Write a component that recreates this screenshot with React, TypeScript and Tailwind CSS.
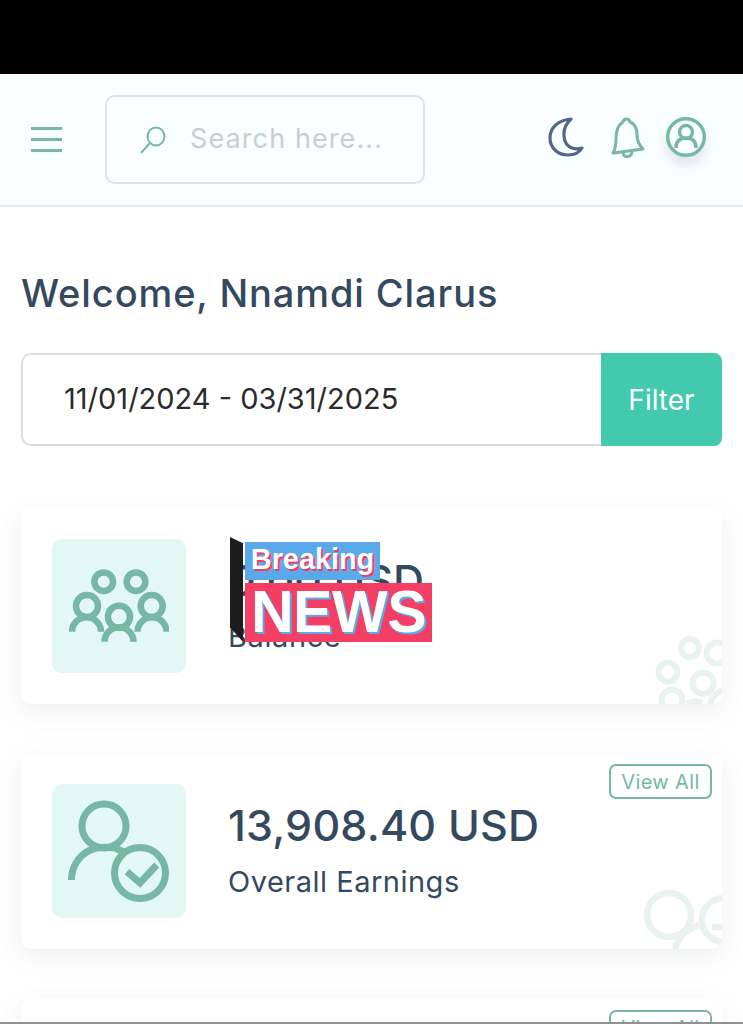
import React from "react";

const G = "#76b8a2";
const FAINT = "#e8f3f0";

function Group({ className }: { className?: string }) {
  return (
    <svg viewBox="0 0 100 74" className={className} fill="none" stroke={G} strokeWidth="6.5">
      <circle cx="34.7" cy="12.7" r="9.3" />
      <circle cx="67" cy="12.7" r="9.3" />
      <circle cx="18" cy="37" r="11" />
      <circle cx="82.7" cy="37" r="11" />
      <circle cx="50" cy="47.7" r="11" />
      <path d="M3 62.7a14.5 14.5 0 0 1 29 0M68.5 62.7a14.5 14.5 0 0 1 29 0M35.5 72.7a14.5 14.5 0 0 1 29 0" />
    </svg>
  );
}

function UserCheck({ className }: { className?: string }) {
  return (
    <svg viewBox="0 0 102 102" className={className} fill="none" stroke={G} strokeWidth="7">
      <circle cx="36" cy="26" r="22" />
      <path d="M3.5 80C3.5 64 14 51 29 48c6-1 13-1 18 0l9 4" />
      <circle cx="72" cy="73" r="25.5" />
      <path d="M59 71.7L72 83l16.7-18" />
    </svg>
  );
}

function GroupDeco() {
  return (
    <svg viewBox="0 0 93 74" className="absolute left-[629px] top-[122px] h-[74px] w-[93px]" fill="none" stroke={FAINT} strokeWidth="6">
      <circle cx="40" cy="18" r="9" />
      <circle cx="67" cy="23" r="10.5" />
      <circle cx="18" cy="42" r="9.5" />
      <circle cx="53" cy="53" r="10.5" />
      <circle cx="22" cy="70" r="10.5" />
      <path d="M60 74c2-8 8-12 14-14M38 74c2-3 8-4 14-1" />
    </svg>
  );
}

function UserDeco() {
  return (
    <svg viewBox="0 0 82 64" className="absolute left-[621px] top-[132px] h-[64px] w-[82px]" fill="none" stroke={FAINT} strokeWidth="6.5">
      <circle cx="27" cy="30" r="22" />
      <circle cx="82" cy="35" r="22" />
      <path d="M33 64C36 52 46 44 57 40" />
      <path d="M70 42h12" />
    </svg>
  );
}

function Card({
  icon,
  children,
  viewAll,
  deco,
  extra = "",
}: {
  icon: React.ReactNode;
  children: React.ReactNode;
  viewAll?: boolean;
  deco?: React.ReactNode;
  extra?: string;
}) {
  return (
    <div className={`relative h-[196px] shrink-0 overflow-hidden rounded-[10px] bg-white shadow-[0_8px_24px_rgba(90,100,110,0.10)] ${extra}`}>
      <div className="flex h-full items-center pl-[31px]">
        <div className="flex h-[134px] w-[134px] shrink-0 items-center justify-center rounded-[10px] bg-[#e3f7f5]">{icon}</div>
        <div className="ml-[42px] flex flex-col">{children}</div>
      </div>
      {deco}
      {viewAll && (
        <div className="absolute right-[10px] top-[11px] flex h-[35px] w-[103px] items-center justify-center rounded-[7px] border-2 border-[#76b8a2] text-[20px] tracking-[0.4px] text-[#76b8a2]">
          View All
        </div>
      )}
    </div>
  );
}

export default function App() {
  return (
    <div className="relative h-[1024px] w-[743px] overflow-hidden bg-white font-['Inter','Open_Sans',sans-serif]">
      <div className="h-[74px] bg-black" />
      <header className="flex h-[133px] items-center border-b-2 border-[#e3e9ec] bg-[#f9fefe]">
        <div className="ml-[31px] flex w-[31px] flex-col gap-[8px]">
          <span className="h-[3px] bg-[#76b8a2]" />
          <span className="h-[3px] bg-[#76b8a2]" />
          <span className="h-[3px] bg-[#76b8a2]" />
        </div>
        <div className="ml-[43px] flex h-[89px] w-[320px] items-center rounded-[10px] border-2 border-[#dfe3e4] pl-[31px]">
          <svg viewBox="0 0 30 30" className="h-[30px] w-[30px]" fill="none" stroke={G} strokeWidth="2">
            <ellipse cx="18" cy="11.5" rx="8.5" ry="9" />
            <path d="M12 18L3 28" />
          </svg>
          <span className="ml-[22px] text-[27px] tracking-[1.1px] text-[#c9cfcf]">Search here...</span>
        </div>
        <svg viewBox="0 0 36 40" className="ml-[123px] -mt-[5px] h-[40px] w-[36px]" fill="none" stroke="#54668a" strokeWidth="3.2">
          <path d="M23 2C11 3 2 10 2 21c0 10 8 17 18 17 6 0 11-2 14-7-3 1-7 1-10 0C15 28 12 12 23 2z" strokeLinejoin="round" />
        </svg>
        <svg viewBox="0 0 36 44" className="ml-[26px] -mt-[3px] h-[44px] w-[36px]" fill="none" stroke={G} strokeWidth="3">
          <path d="M13 6c1-4 6-4 7 0 6 2 7 7 7 13 0 6 2 10 6 14L3 37c3-5 3-9 3-14 0-8 2-14 7-17z" strokeLinejoin="round" />
          <path d="M13 37c1 5 8 5 9-1" />
        </svg>
        <div className="ml-[20px] -mt-[5px] rounded-full shadow-[0_8px_12px_rgba(90,100,110,0.15)]">
          <svg viewBox="0 0 40 40" className="block h-[40px] w-[40px]" fill="none" stroke={G} strokeWidth="3.4">
            <circle cx="20" cy="20" r="18.3" />
            <circle cx="20" cy="15" r="6.5" />
            <path d="M10 31c0-7 4-10 10-10s10 3 10 10" />
          </svg>
        </div>
      </header>

      <main className="px-[21px]">
        <h1 className="mt-[61px] text-[38px] font-medium leading-[50px] tracking-[0.9px] text-[#34495e]">Welcome, Nnamdi Clarus</h1>
        <div className="mt-[35px] flex h-[93px]">
          <div className="flex flex-1 items-center rounded-l-[10px] border-2 border-r-0 border-[#dcdfe0] pb-[2px] pl-[41px] text-[29px] text-[#2b2b2b]">
            11/01/2024 - 03/31/2025
          </div>
          <div className="flex w-[121px] items-center justify-center rounded-r-[8px] bg-[#43c9ae] text-[28px] text-white">Filter</div>
        </div>

        <div className="mt-[62px] flex flex-col gap-[49px]">
          <Card icon={<Group className="h-[74px] w-[100px]" />} deco={<GroupDeco />}>
            <span className="-mt-[5px] text-[43px] font-medium leading-[60px] text-[#34495e]">0.00 USD</span>
            <span className="mt-[7px] text-[29px] leading-[40px] tracking-[0.6px] text-[#34495e]">Balance</span>
          </Card>
          <Card viewAll icon={<UserCheck className="h-[102px] w-[102px]" />} deco={<UserDeco />}>
            <span className="-mt-[5px] text-[43px] font-medium leading-[60px] tracking-[0.2px] text-[#34495e]">13,908.40 USD</span>
            <span className="mt-[7px] text-[29px] leading-[40px] tracking-[0.5px] text-[#34495e]">Overall Earnings</span>
          </Card>
          <Card viewAll icon={null} extra="mt-[1px]">
            <span />
          </Card>
        </div>
      </main>

      <div className="absolute left-[230px] top-[537px] h-[105px] w-[13px] bg-[#1e1c1d] [clip-path:polygon(0_0,100%_6%,100%_100%,0_86%)]" />
      <div className="absolute left-[245px] top-[542px] flex h-[38px] w-[135px] items-center justify-center bg-[#5aa9ea] pb-[3px] font-['Liberation_Sans',sans-serif] text-[29px] font-bold leading-none tracking-[-0.1px] text-white [text-shadow:2px_2px_0_#f23d63]">
        Breaking
      </div>
      <div className="absolute left-[245px] top-[583px] flex h-[59px] w-[187px] items-center justify-center bg-[#f53e63] font-['Liberation_Sans',sans-serif] text-[59px] font-bold leading-none tracking-[-0.5px] text-white [text-shadow:2px_2px_0_#5aa9ea]">
        NEWS
      </div>
      <div className="absolute bottom-0 left-0 h-[2px] w-full bg-[#8f9294]" />
    </div>
  );
}
